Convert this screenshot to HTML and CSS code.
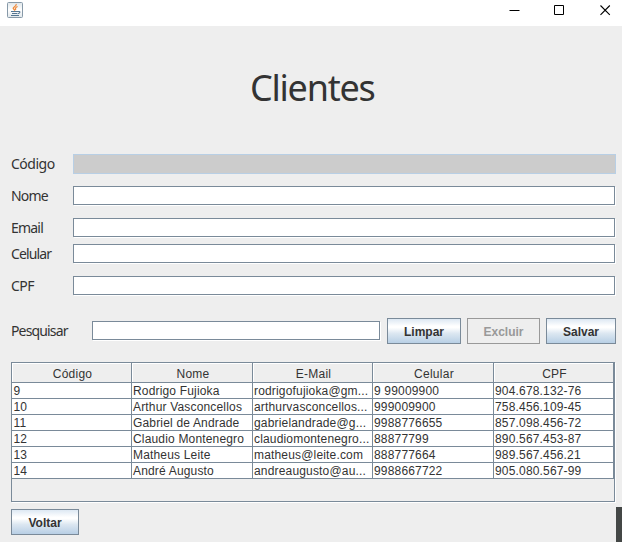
FILE: index.html
```
<!DOCTYPE html>
<html lang="pt-BR">
<head>
<meta charset="utf-8">
<title>Clientes</title>
<link rel="stylesheet" href="styles.css">
</head>
<body>
<div class="window">
  <header class="titlebar">
    <svg class="app-icon" width="16" height="16" viewBox="0 0 16 16">
      <defs><linearGradient id="tile" x1="0" y1="0" x2="0" y2="1"><stop offset="0" stop-color="#dfe6ea"/><stop offset=".5" stop-color="#fff"/><stop offset="1" stop-color="#dfe6ea"/></linearGradient></defs>
      <rect x=".5" y=".5" width="15" height="15" rx="1" fill="url(#tile)" stroke="#8799a8"/>
      <path d="M9.200 2C9.700 4.500 5.800 4.800 6.200 6.500L8 8.600M10.600 4.500C8.500 5.300 8 6.500 8.800 8" fill="none" stroke="#ef8a3c" stroke-width="1.300"/>
      <path d="M4 9.500H10.500M5 11.500H10M4 13.500H12M10.500 9.500C14 9 13.500 11.300 10.500 11.800" fill="none" stroke="#547591" stroke-width="1.100"/>
    </svg>
    <div class="controls">
      <svg width="11" height="11" viewBox="0 0 11 11"><path d="M.5 5.500H10.500" stroke="#000"/></svg>
      <svg width="11" height="11" viewBox="0 0 11 11"><path d="M.5 .5H9.500V9.500H.5Z" fill="none" stroke="#000"/></svg>
      <svg width="11" height="11" viewBox="0 0 11 11"><path d="M.5 .5L9.800 9.800M9.800 .5L.5 9.800" stroke="#000" stroke-width="1.100"/></svg>
    </div>
  </header>
  <main class="content">
    <h1 class="title"><span>Clientes</span></h1>
    <div class="row"><span class="label codigo">Código</span><div class="field disabled"></div></div>
    <div class="row"><span class="label nome">Nome</span><div class="field"></div></div>
    <div class="row tight"><span class="label email">Email</span><div class="field"></div></div>
    <div class="row"><span class="label celular">Celular</span><div class="field"></div></div>
    <div class="row"><span class="label cpf">CPF</span><div class="field"></div></div>
    <div class="search">
      <span class="label pesquisar">Pesquisar</span>
      <div class="field query"></div>
      <button class="btn limpar">Limpar</button>
      <button class="btn excluir" disabled>Excluir</button>
      <button class="btn salvar">Salvar</button>
    </div>
    <div class="pane">
      <div class="line head"><span>Código</span><span>Nome</span><span>E-Mail</span><span>Celular</span><span>CPF</span></div>
      <div class="line"><span>9</span><span>Rodrigo Fujioka</span><span>rodrigofujioka@gm...</span><span>9 99009900</span><span>904.678.132-76</span></div>
      <div class="line"><span>10</span><span>Arthur Vasconcellos</span><span>arthurvasconcellos...</span><span>999009900</span><span>758.456.109-45</span></div>
      <div class="line"><span>11</span><span>Gabriel de Andrade</span><span>gabrielandrade@g...</span><span>9988776655</span><span>857.098.456-72</span></div>
      <div class="line"><span>12</span><span>Claudio Montenegro</span><span>claudiomontenegro...</span><span>88877799</span><span>890.567.453-87</span></div>
      <div class="line"><span>13</span><span>Matheus Leite</span><span>matheus@leite.com</span><span>888777664</span><span>989.567.456.21</span></div>
      <div class="line"><span>14</span><span>André Augusto</span><span>andreaugusto@au...</span><span>9988667722</span><span>905.080.567-99</span></div>
    </div>
    <button class="btn voltar">Voltar</button>
  </main>
  <div class="corner"></div>
</div>
</body>
</html>
```
FILE: styles.css
```
* { box-sizing: border-box; }
body { margin: 0; background: #eee; color: #333; font-family: "Liberation Sans", sans-serif; }
.window { position: relative; width: 622px; height: 542px; overflow: hidden; }
.titlebar { height: 26px; background: #fff; display: flex; justify-content: space-between; padding: 2px 11px 0 7px; }
.controls { display: flex; gap: 35px; padding: 3px 0 0; }
.controls svg:first-child { margin-right: -1px; }
.content { padding: 0 6px 0 11px; }
.title { margin: 0; height: 128px; padding: 39px 0 0 239px; font: 36px/46px "Noto Sans", sans-serif; letter-spacing: -1.250px; }
.row { display: flex; height: 20px; margin-bottom: 12px; }
.row.tight { margin-bottom: 6px; }
.label { width: 62px; flex: none; font: 14px/20px "Noto Sans", sans-serif; letter-spacing: -.85px; white-space: nowrap; }
.label.codigo, .label.cpf { letter-spacing: -.5px; }
.label.nome, .label.email { letter-spacing: -.8px; }
.field { width: 542px; height: 19px; background: #fff; border: 1px solid #7a8a99; box-shadow: 1px 1px 0 #fff; }
.field.disabled { width: 543px; height: 20px; background: #ccc; border-color: #b8cfe5; box-shadow: none; }
.search { display: flex; align-items: center; height: 26px; margin-top: 22px; }
.search .label { width: 81px; }
.query { width: 288px; margin: 0 7px 1px 0; flex: none; }
.btn { display: block; flex: none; height: 26px; padding: 2px 0 0; border: 1px solid #7a8a99; color: #333; font: bold 12px/22px "Liberation Sans", sans-serif; background: linear-gradient(#dde8f3 0%, #fff 30%, #fff 36%, #dce7f1 60%, #b8cfe5 100%); }
.limpar { width: 74px; margin-right: 6px; }
.excluir { width: 73px; margin-right: 6px; color: #999; border-color: #999; background: #eee; }
.salvar { width: 70px; }
.voltar { width: 68px; margin-top: 7px; }
.pane { width: 604px; height: 140px; margin-top: 18px; border: 1px solid #7a8a99; box-shadow: 1px 1px 0 #fff; }
.line { display: grid; grid-template-columns: 120px 121px 120px 121px 120px; height: 16px; background: #fff; font-size: 12px; line-height: 16px; letter-spacing: .17px; }
.line span { height: 16px; border-right: 1px solid #7a8a99; border-bottom: 1px solid #7a8a99; padding-left: 1px; white-space: nowrap; overflow: hidden; }
.line span:first-child { padding-left: 1.500px; }
.line.head { height: 20px; line-height: 20px; background: #eee; text-align: center; letter-spacing: .25px; }
.line.head span { height: 20px; padding: 1px 0 0 2px; box-shadow: inset 1px 1px 0 #fff; }
.corner { position: absolute; right: 0; bottom: 0; width: 6px; height: 35px; background: #444746; }
```
